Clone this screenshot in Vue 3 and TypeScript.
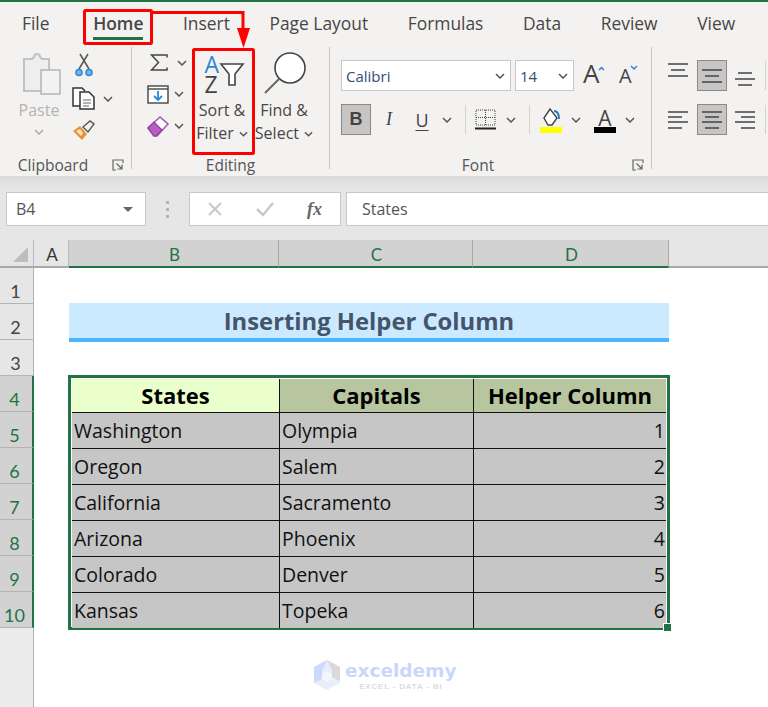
<script setup lang="ts">
const tabs = ['File', 'Home', 'Insert', 'Page Layout', 'Formulas', 'Data', 'Review', 'View']

const rows = [
  ['Washington', 'Olympia', 1],
  ['Oregon', 'Salem', 2],
  ['California', 'Sacramento', 3],
  ['Arizona', 'Phoenix', 4],
  ['Colorado', 'Denver', 5],
  ['Kansas', 'Topeka', 6],
]

const rowNumbers = [1, 2, 3, 4, 5, 6, 7, 8, 9, 10]
</script>

<template>
  <div class="window">
    <svg class="defs" width="0" height="0">
      <symbol id="chev" viewBox="0 0 10 6">
        <path d="M1 1l4 4 4-4" fill="none" stroke="#555" stroke-width="1.5" />
      </symbol>
      <symbol id="launch" viewBox="0 0 12 12">
        <path d="M11 4V1H1v10h3M4.5 4.5L10 10M10 5.5V10H5.5" fill="none" stroke="#666" stroke-width="1.2" />
      </symbol>
    </svg>

    <header class="ribbon">
      <nav class="tabs">
        <span v-for="tab in tabs" :key="tab" class="tab" :class="{ active: tab === 'Home' }">{{ tab }}</span>
      </nav>

      <div class="groups">
        <section class="group clipboard">
          <div class="body">
            <div class="big paste">
              <div class="big-icon paste-icon">
                <svg width="40" height="43" viewBox="0 0 40 43">
                  <path d="M2 6h8l2-2c0-4 6-4 6 0l2 2h7v32H2z" fill="#eee" stroke="#c2c2c2" stroke-width="2" />
                  <rect x="19" y="17" width="19" height="24" fill="#f2f2f2" stroke="#b4b4b4" stroke-width="1.5" />
                </svg>
              </div>
              <span class="big-line muted">Paste</span>
              <svg class="chev muted-chev"><use href="#chev" /></svg>
            </div>
            <div class="clip-tools">
              <svg class="scissors" width="18" height="24" viewBox="0 0 18 24">
                <path d="M4 16L13 1M14 16L5 1" fill="none" stroke="#555" stroke-width="1.5" />
                <circle cx="4" cy="19.5" r="3" fill="#7db6e6" stroke="#2b88d8" stroke-width="1.6" />
                <circle cx="14" cy="19.5" r="3" fill="#7db6e6" stroke="#2b88d8" stroke-width="1.6" />
              </svg>
              <div class="clip-copy">
                <svg width="23" height="23" viewBox="0 0 23 23">
                  <path d="M8 19H1V1h9l3 3" fill="#fff" stroke="#333" stroke-width="1.5" />
                  <path d="M8 5h9l5 5v12H8z" fill="#fff" stroke="#333" stroke-width="1.5" />
                  <path d="M11 13h8M11 16h8M11 19h6" stroke="#666" />
                </svg>
                <svg class="chev ml8"><use href="#chev" /></svg>
              </div>
              <svg width="22" height="21" viewBox="0 0 22 21">
                <path d="M0 11l7-5 7 8-5 6z" fill="#e8912d" />
                <path d="M3 11l4-2 3 4-2 3z" fill="#fbe3c4" />
                <path d="M10 7l7-6 4 3-6 8z" fill="#f4f4f4" stroke="#555" stroke-width="1.4" />
              </svg>
            </div>
          </div>
          <div class="label-row">
            <span class="label">Clipboard</span>
            <svg class="launcher"><use href="#launch" /></svg>
          </div>
        </section>

        <section class="group editing">
          <div class="body">
            <div class="edit-tools">
              <div class="tool-row">
                <svg class="sigma" width="18" height="17" viewBox="0 0 18 17">
                  <path d="M17 3.500V1H1.500l7 7.500-7 7.500H17v-2.500" fill="none" stroke="#444" stroke-width="1.5" />
                </svg>
                <svg class="chev ml9"><use href="#chev" /></svg>
              </div>
              <div class="tool-row">
                <svg width="22" height="19" viewBox="0 0 22 19">
                  <rect x="1" y="1" width="20" height="17" fill="#fff" stroke="#444" stroke-width="1.4" />
                  <path d="M1 4h20" stroke="#444" stroke-width="1.4" />
                  <path d="M11 6v9M7 11l4 4 4-4" fill="none" stroke="#2b88d8" stroke-width="1.8" />
                </svg>
                <svg class="chev ml5"><use href="#chev" /></svg>
              </div>
              <div class="tool-row">
                <svg width="22" height="22" viewBox="0 0 22 22">
                  <path d="M1 13L13 2l8 7-11 12H7z" fill="#fff" stroke="#a855b5" stroke-width="1.6" />
                  <path d="M1 13l6-6 8 8-6 6H7z" fill="#b55dc4" stroke="#8e3f9c" stroke-width="1.2" />
                </svg>
                <svg class="chev ml5"><use href="#chev" /></svg>
              </div>
            </div>
            <div class="big sort">
              <div class="big-icon">
                <svg class="free" width="46" height="42" viewBox="0 0 46 42">
                  <text x="5.500" y="20.500" class="icon-letter blue">A</text>
                  <text x="5.500" y="41" class="icon-letter dark">Z</text>
                  <path d="M22 12h22l-8 10v11h-6V22z" fill="#fff" stroke="#444" stroke-width="1.6" />
                </svg>
              </div>
              <span class="big-line">Sort &amp;</span>
              <span class="big-line">Filter <svg class="chev inline-chev"><use href="#chev" /></svg></span>
            </div>
            <div class="big find">
              <div class="big-icon">
                <svg width="44" height="46" viewBox="0 0 44 46">
                  <circle cx="28" cy="18" r="15" fill="#fff" stroke="#444" stroke-width="1.6" />
                  <path d="M17 29L3 43" stroke="#666" stroke-width="2" />
                </svg>
              </div>
              <span class="big-line">Find &amp;</span>
              <span class="big-line">Select <svg class="chev inline-chev"><use href="#chev" /></svg></span>
            </div>
          </div>
          <div class="label-row">
            <span class="label">Editing</span>
          </div>
        </section>

        <section class="group font">
          <div class="body stacked">
            <div class="font-row">
              <div class="combo font-name"><span class="blue-text">Calibri</span><svg class="chev"><use href="#chev" /></svg></div>
              <div class="combo font-size"><span class="blue-text">14</span><svg class="chev"><use href="#chev" /></svg></div>
              <svg class="ml9 free" width="24" height="24" viewBox="0 0 24 24">
                <text x="0" y="18.500" class="grow-letter big-a">A</text>
                <path d="M16 6l2.500-2.500L21 6" fill="none" stroke="#2b88d8" stroke-width="1.5" />
              </svg>
              <svg class="ml12 free" width="20" height="22" viewBox="0 0 20 22">
                <text x="0" y="17.500" class="grow-letter small-a">A</text>
                <path d="M12 1l3 3 3-3" fill="none" stroke="#2b88d8" stroke-width="1.5" />
              </svg>
            </div>
            <div class="font-row">
              <span class="toggle bold">B</span>
              <span class="glyph italic ml8">I</span>
              <span class="glyph underline ml13">U</span>
              <svg class="chev ml10"><use href="#chev" /></svg>
              <span class="vsep ml13"></span>
              <svg class="ml9" width="21" height="21" viewBox="0 0 21 21">
                <path d="M1 1h19v15H1zM10.500 1v15M1 8.500h19" fill="none" stroke="#444" stroke-dasharray="1 1" />
                <path d="M0 19.500h21" stroke="#222" stroke-width="2" />
              </svg>
              <svg class="chev ml10"><use href="#chev" /></svg>
              <span class="vsep ml13"></span>
              <svg class="ml10" width="22" height="27" viewBox="0 0 22 27">
                <path d="M4 12l6-9 7 9-5 7H8z" fill="#fff" stroke="#444" stroke-width="1.4" />
                <path d="M14 5c3 0 5 3 5 8" fill="none" stroke="#2b79c2" stroke-width="2" />
                <rect x="0" y="21" width="22" height="6" fill="#ffff00" />
              </svg>
              <svg class="chev ml9"><use href="#chev" /></svg>
              <svg class="ml13 free" width="22" height="27" viewBox="0 0 22 27">
                <text x="11" y="19.500" text-anchor="middle" class="grow-letter mid-a">A</text>
                <rect x="0" y="21" width="22" height="6" fill="#000" />
              </svg>
              <svg class="chev ml9"><use href="#chev" /></svg>
            </div>
          </div>
          <div class="label-row">
            <span class="label">Font</span>
            <svg class="launcher"><use href="#launch" /></svg>
          </div>
        </section>

        <section class="group align">
          <div class="body stacked">
            <div class="font-row">
              <svg class="valign-top" width="20" height="14" viewBox="0 0 20 14"><path d="M0 1h20M3 7h14M0 13h20" stroke="#444" stroke-width="1.4" /></svg>
              <span class="toggle ml9">
                <svg width="20" height="14" viewBox="0 0 20 14"><path d="M0 1h20M3 7h14M0 13h20" stroke="#444" stroke-width="1.4" /></svg>
              </span>
              <svg class="ml8 valign-bottom" width="20" height="14" viewBox="0 0 20 14"><path d="M3 1h14M0 7h20M3 13h14" stroke="#444" stroke-width="1.4" /></svg>
              <span class="vsep ml10"></span>
            </div>
            <div class="font-row">
              <svg width="20" height="18" viewBox="0 0 20 18"><path d="M0 1h20M0 6h14M0 11h20M0 17h14" stroke="#444" stroke-width="1.4" /></svg>
              <span class="toggle ml9">
                <svg width="20" height="18" viewBox="0 0 20 18"><path d="M0 1h20M3 6h14M0 11h20M3 17h14" stroke="#444" stroke-width="1.4" /></svg>
              </span>
              <svg class="ml8" width="20" height="18" viewBox="0 0 20 18"><path d="M0 1h20M6 6h14M0 11h20M6 17h14" stroke="#444" stroke-width="1.4" /></svg>
              <span class="vsep ml10"></span>
            </div>
          </div>
        </section>
      </div>
    </header>

    <div class="formula-bar">
      <div class="name-box">
        <span>B4</span>
        <span class="name-caret"></span>
      </div>
      <div class="dots"><i></i><i></i><i></i></div>
      <div class="fx-box">
        <svg width="16" height="16" viewBox="0 0 16 16"><path d="M2 2l12 12M14 2L2 14" stroke="#c8c8c8" stroke-width="2" /></svg>
        <svg width="20" height="16" viewBox="0 0 20 16"><path d="M2 8l6 6L18 2" fill="none" stroke="#c8c8c8" stroke-width="2.500" /></svg>
        <span class="fx">fx</span>
      </div>
      <div class="formula-input">States</div>
    </div>

    <main class="sheet">
      <div class="col-head corner"><span class="triangle"></span></div>
      <div class="col-head">A</div>
      <div class="col-head selected">B</div>
      <div class="col-head selected">C</div>
      <div class="col-head selected">D</div>
      <div class="col-head rest"></div>

      <div class="row-heads">
        <div v-for="n in rowNumbers" :key="n" class="row-head" :class="{ selected: n >= 4 }">{{ n }}</div>
      </div>

      <div class="title">Inserting Helper Column</div>

      <div class="table-wrap">
        <div class="data-table">
          <div class="th states">States</div>
          <div class="th">Capitals</div>
          <div class="th last">Helper Column</div>
          <template v-for="row in rows" :key="row[0]">
            <div class="td">{{ row[0] }}</div>
            <div class="td">{{ row[1] }}</div>
            <div class="td num">{{ row[2] }}</div>
          </template>
        </div>
        <span class="fill-handle"></span>
      </div>

      <div class="watermark">
        <svg width="28" height="32" viewBox="0 0 28 32">
          <path d="M14 1L1 8v16l13 7 13-7V8z" fill="#e8eef8" />
          <path d="M14 1L1 8v16l8-4v-8z" fill="#cbdafa" />
          <path d="M14 1l13 7v14l-8-4v-7z" fill="#d9d9dc" />
          <path d="M14 12l5 3v5l-5 3-5-3v-5z" fill="#f3f5fa" />
        </svg>
        <div class="wm-text">
          <span class="wm-name">exceldemy</span>
          <span class="wm-sub">EXCEL - DATA - BI</span>
        </div>
      </div>
    </main>

    <svg class="callouts" width="768" height="160" viewBox="0 0 768 160">
      <rect x="84.500" y="10.500" width="67" height="33" rx="1" fill="none" stroke="#f00" stroke-width="3" />
      <rect x="193.500" y="49.500" width="60" height="104" rx="1" fill="none" stroke="#f00" stroke-width="3" />
      <path d="M152 12.500h91V32" fill="none" stroke="#f00" stroke-width="3" />
      <path d="M237 28h13l-6.500 20z" fill="#f00" />
    </svg>
  </div>
</template>

<style>
html,
body {
  margin: 0;
  background: #fff;
}
</style>

<style scoped>
.window {
  position: relative;
  width: 768px;
  height: 707px;
  overflow: hidden;
  display: flex;
  flex-direction: column;
  font-family: "Open Sans", "Noto Sans", sans-serif;
  color: #444;
}

.defs {
  position: absolute;
}

.free {
  overflow: visible;
}

.ribbon {
  height: 176px;
  box-sizing: border-box;
  border-top: 2px solid #217346;
  background: #f3f2f1;
  flex: none;
}

.tabs {
  height: 45px;
  display: flex;
  align-items: center;
  gap: 39.600px;
  padding-left: 22px;
  box-sizing: border-box;
  padding-bottom: 4px;
}

.tab {
  position: relative;
  font-size: 17.400px;
  color: #484644;
  white-space: nowrap;
}

.tab:first-child {
  margin-right: 4px;
}

.tab.active {
  font-weight: 600;
  font-size: 17.400px;
}

.tab.active::after {
  content: "";
  position: absolute;
  left: 0;
  right: 0;
  bottom: -5px;
  height: 3px;
  background: #217346;
}

.groups {
  display: flex;
  height: 124px;
}

.group {
  position: relative;
  display: flex;
  flex-direction: column;
  box-sizing: border-box;
  height: 122px;
  border-right: 1px solid #c6c6c6;
  flex: none;
}

.clipboard {
  width: 132px;
}

.editing {
  width: 198px;
}

.font {
  width: 322px;
}

.align {
  flex: 1;
  border-right: none;
}

.body {
  flex: 1;
  display: flex;
}

.stacked {
  flex-direction: column;
  gap: 13px;
  padding-top: 13px;
}

.label-row {
  display: flex;
  align-items: center;
  height: 20px;
  margin-bottom: -6px;
  color: #555;
}

.label {
  flex: 1;
  text-align: center;
  font-size: 15.500px;
}

.launcher {
  width: 12px;
  height: 12px;
  margin: 0 7px 0 6px;
}

.chev {
  width: 10px;
  height: 6px;
  flex: none;
}

.muted-chev {
  opacity: 0.45;
  margin-top: 7px;
}

.inline-chev {
  margin: 0 0 2px 1px;
  width: 9px;
}

.ml5 {
  margin-left: 5px;
}

.ml8 {
  margin-left: 8px;
}

.ml9 {
  margin-left: 9px;
}

.ml10 {
  margin-left: 10px;
}

.ml12 {
  margin-left: 12px;
}

.ml13 {
  margin-left: 13px;
}

.big {
  display: flex;
  flex-direction: column;
  align-items: center;
}

.big-icon {
  height: 52px;
  display: flex;
  align-items: center;
  justify-content: center;
  flex: none;
}

.paste-icon {
  padding: 2px 0 0 5px;
  box-sizing: border-box;
}

.big-line {
  font-size: 16px;
  line-height: 23px;
  white-space: nowrap;
  color: #484644;
}

.muted {
  color: #b4b4b4;
}

.paste {
  width: 42px;
  margin-left: 18px;
  margin-right: 13px;
}

.clip-tools {
  display: flex;
  flex-direction: column;
  padding-top: 6px;
  gap: 10px;
}

.scissors {
  margin-left: 2px;
}

.clip-copy {
  display: flex;
  align-items: center;
  margin-left: -1px;
}

.edit-tools {
  width: 45px;
  padding-left: 15px;
  flex: none;
}

.tool-row {
  height: 31.500px;
  display: flex;
  align-items: center;
}

.sigma {
  margin-left: 3px;
}

.sort {
  width: 60px;
}

.find {
  width: 60px;
  margin-left: 2px;
}

.icon-letter {
  font-family: "Open Sans", sans-serif;
  font-size: 23px;
}

.blue {
  fill: #2b88d8;
}

.dark {
  fill: #444;
}

.font-row {
  height: 31px;
  display: flex;
  align-items: center;
  padding-left: 11px;
}

.align .font-row {
  padding-left: 16px;
}

.combo {
  height: 31px;
  box-sizing: border-box;
  display: flex;
  align-items: center;
  justify-content: space-between;
  border: 1.500px solid #c8c8c8;
  background: #fff;
  padding: 0 5px 0 4px;
  font-size: 15px;
}

.font-name {
  width: 170px;
  margin-right: 4px;
}

.font-size {
  width: 59px;
}

.blue-text {
  color: #2f4f73;
}

.grow-letter {
  font-family: "Open Sans", sans-serif;
  fill: #444;
}

.big-a {
  font-size: 26px;
}

.small-a {
  font-size: 20px;
}

.mid-a {
  font-size: 21px;
}

.toggle {
  width: 30px;
  height: 31px;
  flex: none;
  box-sizing: border-box;
  border: 1.500px solid #8a8a8a;
  background: #c8c6c4;
  display: flex;
  align-items: center;
  justify-content: center;
}

.bold {
  font-family: "Liberation Sans", sans-serif;
  font-weight: 700;
  font-size: 18px;
}

.glyph {
  width: 20px;
  text-align: center;
  font-size: 18px;
  flex: none;
}

.italic {
  font-style: italic;
  font-family: "Liberation Serif", serif;
}

.underline {
  text-decoration: underline;
  text-underline-offset: 3px;
}

.vsep {
  width: 1px;
  height: 29px;
  background: #d2d2d2;
  flex: none;
}

.valign-top {
  align-self: flex-start;
  margin-top: 3px;
}

.valign-bottom {
  align-self: flex-end;
  margin-bottom: 5px;
}

.formula-bar {
  height: 64px;
  flex: none;
  box-sizing: border-box;
  padding: 16px 0 14px 6px;
  display: flex;
  background: linear-gradient(#d9d9d9 0, #e6e6e6 11px);
  font-size: 16px;
  color: #555;
}

.name-box {
  width: 140px;
  box-sizing: border-box;
  border: 1px solid #c8c8c8;
  background: #fff;
  display: flex;
  align-items: center;
  justify-content: space-between;
  padding: 0 12px 0 9px;
}

.name-caret {
  width: 0;
  height: 0;
  border-left: 5px solid transparent;
  border-right: 5px solid transparent;
  border-top: 5px solid #666;
}

.dots {
  width: 43px;
  display: flex;
  flex-direction: column;
  align-items: center;
  justify-content: center;
  gap: 4px;
}

.dots i {
  width: 3px;
  height: 3px;
  background: #b4b4b4;
}

.fx-box {
  width: 152px;
  box-sizing: border-box;
  border: 1px solid #c8c8c8;
  background: #fff;
  display: flex;
  align-items: center;
  gap: 32px;
  padding-left: 17px;
}

.fx {
  font-family: "Liberation Serif", serif;
  font-style: italic;
  font-weight: 700;
  font-size: 18px;
  color: #666;
}

.formula-input {
  flex: 1;
  margin-left: 5px;
  padding-left: 15px;
  border: 1px solid #c8c8c8;
  border-right: none;
  background: #fff;
  display: flex;
  align-items: center;
}

.sheet {
  position: relative;
  flex: 1;
  display: grid;
  grid-template-columns: 34px 35px 210px 194px 196px 1fr;
  grid-template-rows: 28px 36px 36px 36px 252px 1fr;
  font-family: "Lato", "Open Sans", sans-serif;
}

.col-head {
  background: #e6e6e6;
  box-sizing: border-box;
  border-bottom: 2px solid #a8a8a8;
  border-right: 1px solid #b8b8b8;
  display: flex;
  align-items: center;
  justify-content: center;
  font-size: 17px;
  color: #333;
  padding: 2px 0 0 2px;
}

.col-head.selected {
  background: #d2d2d2;
  border-bottom: 2px solid #217346;
  border-right: 1px solid #a8a8a8;
  color: #217346;
}

.col-head.rest {
  border-right: none;
}

.corner {
  position: relative;
}

.triangle {
  position: absolute;
  right: 5px;
  bottom: 4px;
  width: 0;
  height: 0;
  border-left: 15px solid transparent;
  border-bottom: 15px solid #bdbdbd;
}

.row-heads {
  grid-column: 1;
  grid-row: 2 / 7;
  background: #ececec;
  border-right: 1px solid #b0b0b0;
  box-sizing: border-box;
}

.row-head {
  height: 36px;
  box-sizing: border-box;
  background: #e6e6e6;
  border-bottom: 1px solid #b4b4b4;
  display: flex;
  align-items: flex-end;
  justify-content: center;
  padding: 0 2px 1px 0;
  font-size: 18px;
  color: #444;
}

.row-head.selected {
  background: #d2d2d2;
  color: #217346;
  border-right: 2px solid #217346;
  margin-right: -1px;
  padding-right: 3px;
}

.title {
  grid-column: 3 / 6;
  grid-row: 3;
  height: 39px;
  margin-top: -1px;
  box-sizing: border-box;
  background: #cceaff;
  border-bottom: 4px solid #4db5ff;
  display: flex;
  align-items: center;
  justify-content: center;
  padding-top: 1px;
  font-family: "Open Sans", sans-serif;
  font-weight: 700;
  font-size: 23.800px;
  color: #44546a;
}

.table-wrap {
  grid-column: 3 / 6;
  grid-row: 5;
  position: relative;
  box-sizing: border-box;
  margin: -1px 0 -2px -1px;
  height: 255px;
  width: 602px;
  border: 3px solid #217346;
  padding: 1px;
  background: #fff;
}

.data-table {
  display: grid;
  grid-template-columns: 207px 194px 1fr;
  grid-template-rows: 33px repeat(6, 36px);
  font-family: "Open Sans", sans-serif;
  font-size: 19.500px;
  color: #111;
}

.th {
  background: #b7c69e;
  border-left: 1.500px solid #111;
  display: flex;
  align-items: center;
  justify-content: center;
  font-weight: 700;
  font-size: 22px;
  color: #000;
  white-space: nowrap;
  padding-bottom: 2px;
}

.th.states {
  background: #eaffcc;
  border-left: none;
}

.td {
  background: #c6c6c6;
  border-top: 1.500px solid #111;
  border-left: 1.500px solid #111;
  display: flex;
  align-items: center;
  padding-left: 2px;
  white-space: nowrap;
}

.td:nth-child(3n + 1) {
  border-left: none;
}

.td.num {
  justify-content: flex-end;
  padding-right: 1px;
}

.fill-handle {
  position: absolute;
  right: -5px;
  bottom: -5px;
  width: 7px;
  height: 7px;
  background: #217346;
  border: 1px solid #fff;
}

.watermark {
  position: absolute;
  left: 313px;
  top: 419px;
  display: flex;
  gap: 4px;
  align-items: flex-start;
}

.wm-text {
  display: flex;
  flex-direction: column;
  align-items: center;
}

.wm-name {
  font-family: "DejaVu Sans", sans-serif;
  font-weight: 700;
  font-size: 18.500px;
  line-height: 24px;
  color: #c9d8f8;
}

.wm-sub {
  font-family: "Liberation Sans", sans-serif;
  font-weight: 700;
  font-size: 8px;
  letter-spacing: 0.800px;
  line-height: 8px;
  color: #dcdcdc;
}

.callouts {
  position: absolute;
  left: 0;
  top: 0;
  pointer-events: none;
}
</style>
